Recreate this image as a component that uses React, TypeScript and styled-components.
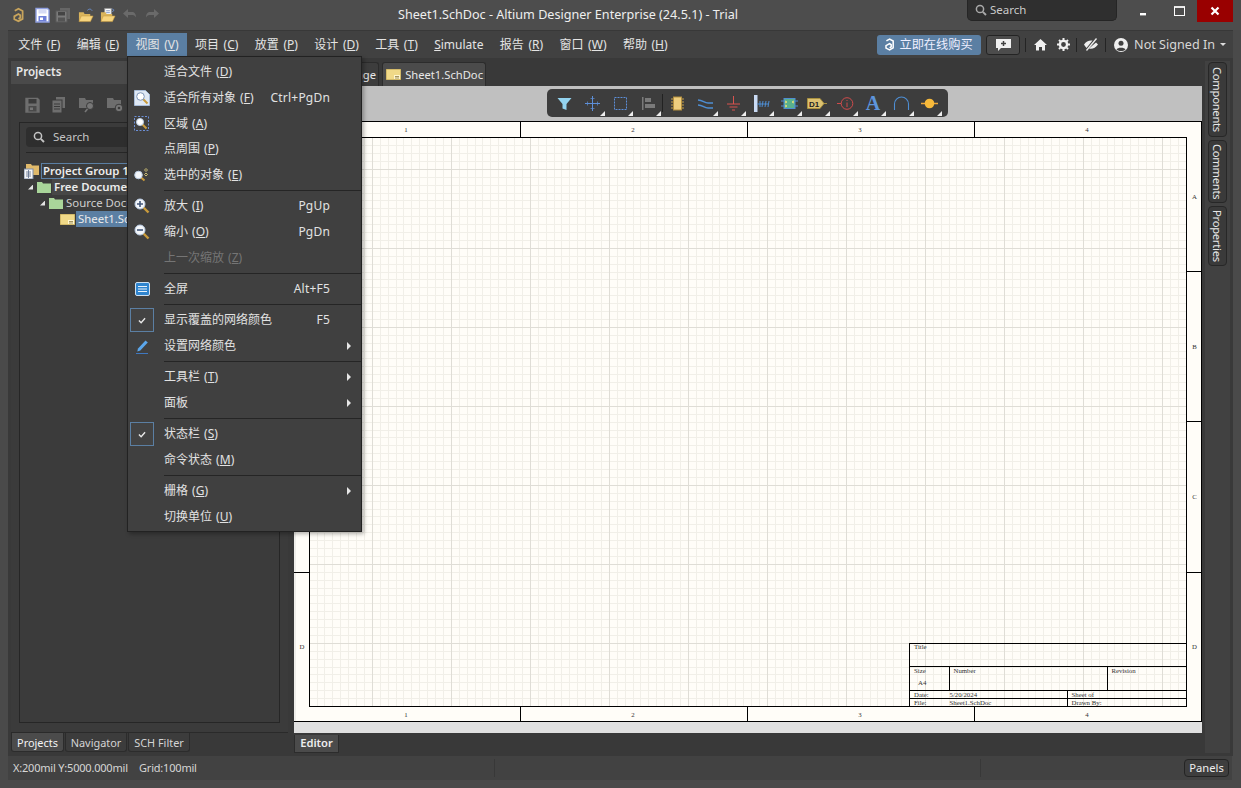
import React from "react";
import styled, { createGlobalStyle } from "styled-components";

const Global = createGlobalStyle`
  html, body { margin: 0; padding: 0; background: #4a4a4a; }
  #root { width: 1241px; height: 788px; overflow: hidden; }
  * { box-sizing: border-box; }
  u { text-underline-offset: 1px; }
`;
const FONT = `"Noto Sans", "Noto Sans CJK SC", sans-serif`;

const Window = styled.div`
  position: relative; width: 1241px; height: 788px; background: #4a4a4a; overflow: hidden;
  display: flex; flex-direction: column; font: 12px/16px ${FONT}; color: #e4e4e4;
`;
const TitleBar = styled.header`
  height: 30px; flex: none; display: flex; align-items: flex-start; background: #4d4d4d; padding-left: 12px; position: relative;
`;
const QuickIcons = styled.div`display: flex; align-items: center; height: 30px; width: 160px;`;
const QuickIcon = styled.span<{ $w: number }>`width: ${p => p.$w}px; height: 16px; display: flex; justify-content: center; flex: none;`;
const AppTitle = styled.div`
  width: 620px; margin-left: 0; padding-left: 226px; height: 30px; line-height: 30px; font-size: 12.6px; color: #efefef; white-space: nowrap; flex: none;
`;
const TopSearch = styled.div`
  margin-left: 175px; width: 150px; height: 21px; background: #2f2f2f; border: 1px solid #252525; border-top: 0; border-radius: 0 0 5px 5px;
  display: flex; align-items: center; padding-left: 7px; gap: 3px; font-size: 11.5px; color: #c9c9c9; flex: none;
`;
const WinButtons = styled.div`display: flex; margin-left: 8px; flex: none;`;
const WinBtn = styled.div<{ $close?: boolean }>`
  width: 36px; height: 22px; display: flex; align-items: center; justify-content: center; background: ${p => p.$close ? "#990000" : "transparent"};
`;
const MenuBar = styled.nav`
  height: 28px; flex: none; margin: 0 8px; background: #414141; border-top: 1px solid #383838; display: flex; align-items: center; padding: 0 0 0 2px;
`;
const MenuItem = styled.div<{ $active?: boolean }>`
  height: 24px; line-height: 24px; padding: 0 8.2px; white-space: nowrap; font-size: 12px; word-spacing: 1.5px; margin-top: 1px; background: ${p => p.$active ? "#5b7fa3" : "transparent"};
`;
const MenuRight = styled.div`margin-left: auto; display: flex; align-items: center; height: 24px; padding-right: 7px;`;
const BuyButton = styled.div`
  width: 104px; height: 20px; border-radius: 3px; background: #5b7fa3; display: flex; align-items: center; padding-left: 7px; gap: 5px; font-size: 12.2px; color: #eef;
`;
const ChatButton = styled.div`
  margin-left: 5px; width: 34px; height: 20px; background: #4c4c4c; border: 1px solid #242424; border-radius: 3px; display: flex; align-items: center; justify-content: center;
`;
const BarSep = styled.span<{ $ml: number }>`width: 1px; height: 14px; background: #242424; margin-left: ${p => p.$ml}px; flex: none;`;
const TopGlyph = styled.span<{ $ml: number }>`margin-left: ${p => p.$ml}px; height: 16px; display: flex; align-items: center; flex: none;`;
const SignIn = styled.span`margin-left: 6px; font-size: 12.6px; color: #d8d8d8; white-space: nowrap;`;
const Caret = styled.span`margin-left: 5px; width: 0; height: 0; border: 3px solid transparent; border-top: 3px solid #ddd; border-bottom: 0;`;

const Body = styled.main`flex: 1; margin: 0 8px; background: #393939; display: flex; min-height: 0;`;
const ProjectPanel = styled.aside`width: 277px; margin: 3px 0 0 3px; display: flex; flex-direction: column; flex: none;`;
const PanelHead = styled.div`height: 23px; line-height: 22px; background: #4a4a4a; padding-left: 5px; font-weight: 600; font-size: 11.6px; color: #e8e8e8; flex: none;`;
const PanelBody = styled.div`flex: 1; min-height: 0; background: #3b3b3b; padding: 0 8px 9px; display: flex; flex-direction: column; border-bottom: 1px solid #2a2a2a;`;
const PanelTools = styled.div`height: 38px; padding: 13px 0 0 6px; display: flex; gap: 10px; flex: none;`;
const ListBox = styled.div`flex: 1; border: 1px solid #262626; padding: 4px 6px; overflow: hidden; min-height: 0;`;
const SearchField = styled.div`
  height: 20px; background: #2e2e2e; border-radius: 4px; display: flex; align-items: center; gap: 8px; padding: 0 0 1px 7px; color: #c4c4c4; font-size: 11.5px;
`;
const Rule = styled.div`height: 1px; background: #262626; margin-top: 5px;`;
const Tree = styled.div`margin-top: 10px; margin-left: -7px;`;
const TreeRow = styled.div<{ $indent: number }>`height: 16px; display: flex; align-items: center; padding-left: ${p => p.$indent}px; white-space: nowrap;`;
const Twist = styled.span`width: 5px; height: 5px; background: #e4e4e4; clip-path: polygon(100% 0, 100% 100%, 0 100%); margin: 0 4px 0 2px; flex: none;`;
const TreeLabel = styled.span<{ $kind?: string }>`
  margin-left: 1px; padding: 0 2px; line-height: 15px; height: 16px; font-size: 11.4px; color: #e6e6e6;
  font-weight: ${p => (p.$kind === "bold" || p.$kind === "group") ? 600 : 400};
  background: ${p => p.$kind === "selected" ? "#5b7fa3" : p.$kind === "bold" ? "#474747" : "transparent"};
  outline: ${p => p.$kind === "group" ? "1px solid #5b7fa3" : "none"}; outline-offset: -1px;
  color: ${p => p.$kind === "source" ? "#cfcfcf" : "#ececec"};
`;
const TabStrip = styled.div`height: 19px; display: flex; flex: none; padding-left: 0; gap: 1px;`;
const BottomTab = styled.div<{ $active?: boolean; $w: number }>`
  width: ${p => p.$w}px; text-align: center; line-height: 19px; font-size: 10.9px; color: ${p => p.$active ? "#f4f4f4" : "#d4d4d4"};
  background: ${p => p.$active ? "#4b4b4b" : "#3c3c3c"}; border: 1px solid #2c2c2c; border-top: 0; border-radius: 0 0 3px 3px;
`;
const PanelFoot = styled.div`height: 4px; flex: none;`;

const DocColumn = styled.section`width: 908px; margin-left: 6px; display: flex; flex-direction: column; flex: none;`;
const DocTabs = styled.div`height: 28px; padding-top: 4px; display: flex; flex: none; padding-left: 8px; gap: 3px;`;
const DocTab = styled.div<{ $active?: boolean; $w: number }>`
  width: ${p => p.$w}px; height: 24px; background: ${p => p.$active ? "#4b4b4b" : "#3d3d3d"}; border: 1px solid #2c2c2c; border-bottom: 0; border-radius: 3px 3px 0 0;
  display: flex; align-items: center; justify-content: flex-end; gap: 4px; padding: 0 2px; font-size: 11.2px; color: #e8e8e8; white-space: nowrap;
`;
const Canvas = styled.div`position: relative; height: 647px; flex: none; display: flex; flex-direction: column; background: #e0e0e0;`;
const TopStrip = styled.div`height: 35px; background: #c0c0c0; flex: none;`;
const Sheet = styled.svg`display: block; flex: none;`;
const PlaceBar = styled.div`
  position: absolute; left: 253px; top: 3px; width: 401px; height: 28px; background: #3d3d3d; border-radius: 5px; display: flex; padding-left: 3px;
`;
const PlaceCell = styled.div`position: relative; width: 28px; height: 28px; flex: none; display: flex; align-items: center; justify-content: center;`;
const Corner = styled.span`position: absolute; right: 1px; bottom: 1px; width: 5px; height: 5px; background: #eee; clip-path: polygon(100% 0, 100% 100%, 0 100%);`;
const PlaceSep = styled.span`width: 1px; height: 18px; background: #222; margin: 5px 0 0 0; flex: none;`;
const EditorStrip = styled.div`height: 23px; padding-top: 2px; flex: none;`;
const EditorTab = styled.div`
  width: 45px; height: 18px; background: #4b4b4b; border: 1px solid #2c2c2c; border-top: 0; text-align: center; line-height: 16px; font-size: 11.2px; font-weight: 600; color: #eee;
`;
const Rail = styled.div`width: 25px; margin: 3px 0 3px 3px; background: #414141; padding: 1px 3px; display: flex; flex-direction: column; gap: 3px; flex: none;`;
const RailTab = styled.div<{ $h: number }>`
  height: ${p => p.$h}px; width: 19px; background: #3a3a3a; border: 1px solid #272727; border-radius: 4px; writing-mode: vertical-rl;
  display: flex; align-items: center; justify-content: center; font-size: 11.2px; line-height: 17px; color: #e8e8e8; letter-spacing: -0.25px;
`;
const StatusBar = styled.footer`
  height: 24px; flex: none; margin: 0 9px 8px 8px; background: #424242; display: flex; align-items: center; padding-left: 5px; font-size: 11px; letter-spacing: -0.2px; color: #d6d6d6; white-space: nowrap;
`;
const StatusText = styled.span`width: 126px; flex: none;`;
const GridText = styled.span`width: 60px; flex: none;`;
const StatusSep = styled.span<{ $ml: number }>`margin-left: ${p => p.$ml}px; width: 1px; height: 18px; background: #383838; flex: none;`;
const PanelsBtn = styled.div`
  margin-left: 203px; width: 45px; height: 18px; background: #3e3e3e; border: 1px solid #242424; border-radius: 4px; text-align: center; line-height: 15px; font-size: 11.2px; letter-spacing: 0; color: #eee;
`;

const DropMenu = styled.div`
  position: absolute; left: 127px; top: 56px; width: 235px; height: 476px; padding-top: 2px; background: #404040; border: 1px solid #222; box-shadow: 2px 2px 4px rgba(0,0,0,.3); z-index: 5;
`;
const DropRow = styled.div<{ $off?: boolean }>`
  height: 25.85px; display: flex; align-items: center; color: ${p => p.$off ? "#757575" : "#e2e2e2"}; font-size: 12px; white-space: nowrap;
`;
const IconSlot = styled.span`width: 36px; flex: none; display: flex; justify-content: center; padding-right: 8px; position: relative;`;
const CheckBox = styled.span`
  width: 24px; height: 24px; border: 1px solid #5b7fa3; display: flex; align-items: center; justify-content: center; background: #434343; flex: none;
`;
const RowLabel = styled.span`flex: 1; word-spacing: 1px;`;
const Shortcut = styled.span`margin-right: 31px; letter-spacing: 0.2px;`;
const Arrow = styled.span`margin-right: 10px; width: 0; height: 0; border-left: 4px solid #e6e6e6; border-top: 4px solid transparent; border-bottom: 4px solid transparent;`;
const DropSep = styled.div`height: 1px; margin: 2.125px 0 2.125px 36px; background: #252525;`;

/* ---------- icons ---------- */
const Floppy = ({ c = "#8f9fe0", dim = false }: { c?: string; dim?: boolean }) => (
  <svg width="15" height="16" viewBox="0 0 15 16">
    <path d="M1 1.500h11.500L14 3v12H1z" fill={dim ? "#6e6e6e" : "#fff"} stroke={dim ? "#6e6e6e" : c} strokeWidth="1.400" />
    <rect x="3.500" y="2" width="8" height="4.500" fill={dim ? "#3b3b3b" : "#d7dcf5"} />
    <rect x="3.500" y="9" width="8" height="5.500" fill={dim ? "#4a4a4a" : "#6f80d8"} />
    <rect x="5" y="10.500" width="3" height="2.500" fill={dim ? "#777" : "#fff"} />
  </svg>
);
const SaveAll = () => (
  <svg width="16" height="16" viewBox="0 0 16 16">
    <rect x="5" y="1" width="10" height="11" fill="#666" />
    <rect x="1" y="4" width="11" height="11" fill="#7a7a7a" stroke="#5a5a5a" />
    <rect x="3" y="5" width="7" height="3.500" fill="#444" />
    <rect x="3" y="10.500" width="7" height="4" fill="#545454" />
  </svg>
);
const OpenFolder = ({ doc = false }: { doc?: boolean }) => (
  <svg width="17" height="17" viewBox="0 0 17 17">
    {doc && <path d="M5 1h7v9H5z" fill="#fff" stroke="#999" />}
    {doc && <path d="M6.500 3.500h4M6.500 5.500h4M6.500 7.500h4" stroke="#7d92c0" />}
    {!doc && <path d="M10 3c2-2 4-1.500 5 0.500" stroke="#6b8fd0" fill="none" />}
    <path d="M1 5h5l1 2h6v7H1z" fill="#d9b45c" />
    <path d="M3.500 9H16l-2.800 6H1z" fill="#f6d47e" stroke="#c89c42" strokeWidth=".6" />
    {doc && <path d="M13 1.500l2 1.500-2 1.500" stroke="#6b8fd0" fill="none" />}
  </svg>
);
const Curve = ({ flip = false }: { flip?: boolean }) => (
  <svg width="16" height="12" viewBox="0 0 16 12" style={flip ? { transform: "scaleX(-1)" } : undefined}>
    <path d="M3 5h7c3 0 4 2.500 4 5.500C12.500 8 11 8 9 8H6v3L1 6.500 6 2v3" fill="#6a6a6a" />
  </svg>
);
const AltiumMark = ({ c = "#c8a45c", s = 16 }: { c?: string; s?: number }) => (
  <svg width={s * 0.8} height={s} viewBox="0 0 13 16" fill="none">
    <path d="M3 3.500 7 1.200l4.500 2.500v8.500L7 14.800l-4.500-2.300V9.500L7 7l2 1.300v2.700L7 12.200" stroke={c} strokeWidth="1.900" />
  </svg>
);
const SearchGlass = ({ c = "#a9a9a9" }: { c?: string }) => (
  <svg width="12" height="12" viewBox="0 0 12 12" fill="none">
    <circle cx="5" cy="5" r="3.600" stroke={c} strokeWidth="1.500" />
    <path d="M7.800 7.800 11 11" stroke={c} strokeWidth="1.900" />
  </svg>
);
const Lens = ({ sign }: { sign?: "+" | "-" }) => (
  <svg width="16" height="16" viewBox="0 0 16 16">
    <path d="M9 9l5.500 5.500" stroke="#c99b3c" strokeWidth="2.400" />
    <circle cx="6" cy="6" r="5" fill="#f4f7fb" stroke="#b9cbe2" />
    {sign && <path d={sign === "+" ? "M3 6h6M6 3v6" : "M3 6h6"} stroke="#43577a" strokeWidth="1.600" />}
  </svg>
);
const PageLens = () => (
  <svg width="16" height="16" viewBox="0 0 16 16">
    <path d="M.5.500h11l4 4v11H.500z" fill="#dfe8f4" stroke="#a8bcd8" />
    <path d="M9 9l4.500 4.500" stroke="#c99b3c" strokeWidth="2" />
    <circle cx="6.500" cy="6.500" r="3.800" fill="#fff" stroke="#7d94b8" />
  </svg>
);
const AreaLens = () => (
  <svg width="16" height="16" viewBox="0 0 16 16">
    <rect x=".5" y=".5" width="14" height="14" fill="none" stroke="#6c8fd6" strokeDasharray="2 1.500" />
    <path d="M8 8l4.500 4.500" stroke="#c99b3c" strokeWidth="2" />
    <circle cx="6" cy="6" r="3.500" fill="#fff" stroke="#b9cbe2" />
  </svg>
);
const SelLens = () => (
  <svg width="16" height="16" viewBox="0 0 16 16">
    <path d="M6.500 10l4 3.500" stroke="#c99b3c" strokeWidth="2" />
    <circle cx="4.500" cy="8" r="3.800" fill="#f4f7fb" stroke="#b9cbe2" />
    <path d="M12 1.500l1.500 1.500-1.500 1.500-1.500-1.500zM12 6l1.500 1.500-1.500 1.500-1.500-1.500z" fill="none" stroke="#d8c878" strokeWidth=".9" />
  </svg>
);
const Screen = () => (
  <svg width="15" height="14" viewBox="0 0 15 14">
    <rect x=".5" y=".5" width="14" height="13" rx="1.500" fill="#2f85cf" stroke="#cfe0f0" />
    <path d="M3 4.500h9M3 7h9M3 9.500h9" stroke="#e8f2fb" />
  </svg>
);
const Pen = () => (
  <svg width="14" height="15" viewBox="0 0 14 15">
    <path d="M3 9.500 10.500 1.500l2.300 2-7.500 8-3 1z" fill="#5ba7ec" />
    <path d="M1 14.500h12" stroke="#3f78c0" />
  </svg>
);
const Tick = () => (
  <svg width="8" height="7" viewBox="0 0 9 8" fill="none"><path d="M1 4l2.500 2.500L8 1.500" stroke="#e8e8e8" strokeWidth="1.600" /></svg>
);
const Folder = ({ c = "#a9d59a" }: { c?: string }) => (
  <svg width="14" height="12" viewBox="0 0 14 12"><path d="M0 1h5l1 1.500h8V12H0z" fill={c} /></svg>
);
const SchDocIcon = () => (
  <svg width="15" height="11" viewBox="0 0 15 11">
    <rect width="15" height="11" fill="#f0d988" stroke="#b59b4c" />
    <rect x="8" y="6" width="6" height="4" fill="#fff6cf" />
    <path d="M9 7.500h4M9 9h4" stroke="#7c6a2e" strokeWidth=".7" />
  </svg>
);
const GroupIcon = () => (
  <svg width="16" height="15" viewBox="0 0 16 15">
    <path d="M2 0h5l1 1.500h7V11H2z" fill="#e0b96a" />
    <rect x="0" y="5" width="9" height="10" fill="#f6f6f6" stroke="#7d8da8" />
    <path d="M2 8h5M2 10h5M2 12h5M4.500 6v8" stroke="#5a6b88" strokeWidth=".8" />
  </svg>
);
const ToolGlyph = ({ kind }: { kind: "copy" | "search" | "gear" }) => (
  <svg width="18" height="16" viewBox="0 0 18 16">
    {kind === "copy" ? (
      <g fill="#6e6e6e"><rect x="6" y="0" width="9" height="11" /><rect x="2" y="3" width="10" height="13" stroke="#3b3b3b" /><path d="M4 7h6M4 9.500h6M4 12h6" stroke="#3b3b3b" /></g>
    ) : (
      <g>
        <path d="M1 1h6l1 2h7v8H1z" fill="#6e6e6e" />
        {kind === "search"
          ? <g><circle cx="12" cy="9" r="3.500" fill="#777" stroke="#3b3b3b" /><path d="M9.500 12l-2.500 3" stroke="#777" strokeWidth="1.600" /></g>
          : <g><circle cx="13" cy="11" r="3.800" fill="#777" stroke="#3b3b3b" /><circle cx="13" cy="11" r="1.300" fill="#3b3b3b" /></g>}
      </g>
    )}
  </svg>
);
const Home = () => (
  <svg width="13" height="13" viewBox="0 0 13 13"><path d="M6.500 1 13 7h-2v5.500H8V9H5v3.500H2V7H0z" fill="#f0f0f0" /></svg>
);
const Gear = () => (
  <svg width="13" height="13" viewBox="0 0 13 13">
    <circle cx="6.500" cy="6.500" r="3.600" fill="none" stroke="#f0f0f0" strokeWidth="2.400" />
    <path d="M6.500 0v13M0 6.500h13M2 2l9 9M11 2l-9 9" stroke="#f0f0f0" strokeWidth="2" strokeDasharray="2 9 2 0" />
  </svg>
);
const NoEye = () => (
  <svg width="14" height="13" viewBox="0 0 14 13">
    <path d="M0 6.500C2 3.500 5 2 8.500 2.500L2.500 10C1.500 9 .7 7.800 0 6.500z" fill="#eee" />
    <path d="M12 4.500 14 6.500C11.500 10 8 11.500 5 10.500z" fill="#eee" />
    <path d="M2.500 12.500 12.500 .5" stroke="#eee" strokeWidth="1.300" />
  </svg>
);
const User = () => (
  <svg width="14" height="14" viewBox="0 0 14 14">
    <circle cx="7" cy="7" r="7" fill="#efefef" />
    <circle cx="7" cy="5.300" r="2.500" fill="#414141" />
    <path d="M2.500 11.500C3.500 9 10.500 9 11.500 11.500 9 13.500 5 13.500 2.500 11.500z" fill="#414141" />
  </svg>
);
const Chat = () => (
  <svg width="17" height="14" viewBox="0 0 17 14">
    <path d="M1 1h15v9H6l-3 3v-3H1z" fill="#f0f0f0" />
    <path d="M8.500 3v5M6 5.500h5" stroke="#414141" strokeWidth="1.500" />
  </svg>
);
const place: Record<string, React.ReactNode> = {
  filter: <path d="M1.500 3h14l-5 6v6l-4-1.500V9z" fill="#93d3ef" />,
  cross: <g stroke="#5d8fd8" fill="none"><path d="M8.500 1v15M1 8.500h15" /><path d="M6.500 3.500h4M6.500 13.500h4M3.500 6.500v4M13.500 6.500v4" strokeWidth=".7" /></g>,
  rect: <rect x="2.500" y="2.500" width="12" height="12" fill="none" stroke="#5d8fd8" strokeDasharray="2 1" />,
  align: <g fill="#7a7a7a"><rect x="2" y="2" width="1.500" height="13" /><rect x="5" y="3" width="6" height="4" /><rect x="5" y="9" width="10" height="4" /></g>,
  chip: <g><path d="M2 4h13M2 7h13M2 10h13M2 13h13" stroke="#c7a14a" /><rect x="4.500" y="2" width="8" height="13" fill="#efce7e" stroke="#b48f3e" /></g>,
  wires: <g stroke="#4e8ed3" strokeWidth="1.600" fill="none"><path d="M1 5c5 0 6 3 10 3h5" /><path d="M1 10c5 0 6 3 10 3h5" /></g>,
  gnd: <g stroke="#d9534f" fill="none"><path d="M8.500 1v8" /><path d="M2 9h13M4.500 12h8M7 15h3" /></g>,
  bus: <g><rect x="1" y="0" width="3.500" height="17" fill="#c9daf4" /><path d="M4 9h11M7 6v6M10 6l-1 6M13 6l-1 6M16 6l-1 6" stroke="#4e8ed3" fill="none" /></g>,
  sheet: <g><rect x="3" y="3.500" width="11" height="10" fill="#59b08c" stroke="#4e8ed3" /><path d="M0 6h4M0 11h4M13 6h4M13 11h4" stroke="#4e8ed3" /><path d="M4 6l2 1-2 1M4 10l2 1-2 1M13 6l-2 1 2 1" stroke="#e9e07a" fill="none" /></g>,
  probe: <g stroke="#cf4b4b" fill="none"><circle cx="10" cy="8.500" r="5.800" /><path d="M0 8.500h4M10 5v1M10 7.500V12" /></g>,
  arc: <path d="M1.500 15V9a7 7 0 0 1 14 0v6" fill="none" stroke="#4e8ed3" strokeWidth="1.100" />,
  dot: <g><path d="M0 8.500h17" stroke="#f1a93a" strokeWidth="1.500" /><circle cx="8.500" cy="8.500" r="4.800" fill="#f7b93a" /></g>,
};
const Tagged = () => (
  <svg width="20" height="11" viewBox="0 0 20 11">
    <path d="M.5.500h12.500l4 5-4 5H.5z" fill="#dcc272" stroke="#a9913f" />
    <path d="M17 5.500h3" stroke="#a9913f" />
    <text x="2" y="8.500" fontFamily="Liberation Sans, sans-serif" fontSize="8" fontWeight="700" fill="#222">D1</text>
  </svg>
);
const ALetter = styled.span`font: 700 20px/20px "Liberation Serif", serif; color: #5d95dc;`;
const PI = ({ k }: { k: string }) => <svg width="17" height="17" viewBox="0 0 17 17">{place[k]}</svg>;

/* ---------- data ---------- */
const topMenu: React.ReactNode[] = [
  <>文件 (<u>F</u>)</>, <>编辑 (<u>E</u>)</>, <>视图 (<u>V</u>)</>, <>项目 (<u>C</u>)</>, <>放置 (<u>P</u>)</>, <>设计 (<u>D</u>)</>,
  <>工具 (<u>T</u>)</>, <><u>S</u>imulate</>, <>报告 (<u>R</u>)</>, <>窗口 (<u>W</u>)</>, <>帮助 (<u>H</u>)</>,
];
type Entry = { label?: React.ReactNode; icon?: React.ReactNode; key?: string; sub?: boolean; off?: boolean; sep?: boolean };
const check = <CheckBox><Tick /></CheckBox>;
const menu: Entry[] = [
  { label: <>适合文件 (<u>D</u>)</> },
  { label: <>适合所有对象 (<u>F</u>)</>, icon: <PageLens />, key: "Ctrl+PgDn" },
  { label: <>区域 (<u>A</u>)</>, icon: <AreaLens /> },
  { label: <>点周围 (<u>P</u>)</> },
  { label: <>选中的对象 (<u>E</u>)</>, icon: <SelLens /> },
  { sep: true },
  { label: <>放大 (<u>I</u>)</>, icon: <Lens sign="+" />, key: "PgUp" },
  { label: <>缩小 (<u>O</u>)</>, icon: <Lens sign="-" />, key: "PgDn" },
  { label: <>上一次缩放 (<u>Z</u>)</>, off: true },
  { sep: true },
  { label: <>全屏</>, icon: <Screen />, key: "Alt+F5" },
  { sep: true },
  { label: <>显示覆盖的网络颜色</>, icon: check, key: "F5" },
  { label: <>设置网络颜色</>, icon: <Pen />, sub: true },
  { sep: true },
  { label: <>工具栏 (<u>T</u>)</>, sub: true },
  { label: <>面板</>, sub: true },
  { sep: true },
  { label: <>状态栏 (<u>S</u>)</>, icon: check },
  { label: <>命令状态 (<u>M</u>)</> },
  { sep: true },
  { label: <>栅格 (<u>G</u>)</>, sub: true },
  { label: <>切换单位 (<u>U</u>)</> },
];

const range = (n: number) => Array.from({ length: n }, (_, i) => i);
const L = 310, R = 1187, T = 137, B = 706;
const SheetText = styled.text`font-family: "Liberation Serif", serif; font-size: 6.8px; fill: #333;`;

const SheetDrawing = () => {
  const minorX: number[] = [], majorX: number[] = [], minorY: number[] = [], majorY: number[] = [];
  range(130).forEach(i => { const x = 293.3 + i * 7.9; if (x > L && x < R - 1) (i % 10 === 0 ? majorX : minorX).push(Math.floor(x) + 0.5); });
  range(90).forEach(i => { const y = 90.3 + i * 7.9; if (y > T && y < B) (i % 10 === 0 ? majorY : minorY).push(Math.floor(y) + 0.5); });
  const ink = "#000";
  return (
    <Sheet width={908} height={601} viewBox="294 121 908 601" shapeRendering="crispEdges">
      <rect x="294" y="121" width="908" height="601" fill="#fffdf8" />
      <rect x="294" y="121" width="2" height="601" fill="#efeeea" />
      {minorX.map(x => <line key={x} x1={x} x2={x} y1={T} y2={B} stroke="#f1efe8" />)}
      {minorY.map(y => <line key={y} x1={L} x2={R} y1={y} y2={y} stroke="#f1efe8" />)}
      {majorX.map(x => <line key={x} x1={x} x2={x} y1={T} y2={B} stroke="#dfddd6" />)}
      {majorY.map(y => <line key={y} x1={L} x2={R} y1={y} y2={y} stroke="#dfddd6" />)}
      <g stroke={ink} fill="none">
        <path d="M294 121.500H1201.500V721.500H294" />
        <rect x={309.5} y={T + .5} width={877} height={B - T} />
        {[520, 747, 974].map(x => <path key={x} d={`M${x}.5 121V${T}M${x}.5 ${B}V722`} />)}
        {[271, 421, 572].map(y => <path key={y} d={`M294 ${y}.5H${L}M${R} ${y}.5H1202`} />)}
        <path d="M909.500 706V643.500H1186M909 666.500H1186M909 690.500H1186M909 698.500H1186M949.500 666V690M1107.500 666V690M1067.500 690V706" />
      </g>
      <g textAnchor="middle">
        {[["1", 406], ["2", 633], ["3", 860], ["4", 1087]].map(([t, x]) => (
          <React.Fragment key={t}>
            <SheetText x={x} y={132}>{t}</SheetText>
            <SheetText x={x} y={717}>{t}</SheetText>
          </React.Fragment>
        ))}
        {[["A", 199], ["B", 349], ["C", 499], ["D", 648.5]].map(([t, y]) => (
          <SheetText key={t} x={1194.5} y={y}>{t}</SheetText>
        ))}
        <SheetText x={302} y={648.5}>D</SheetText>
      </g>
      <SheetText x={914} y={649}>Title</SheetText>
      <SheetText x={914} y={673}>Size</SheetText>
      <SheetText x={918} y={685}>A4</SheetText>
      <SheetText x={953.5} y={673}>Number</SheetText>
      <SheetText x={1111.5} y={673}>Revision</SheetText>
      <SheetText x={914} y={696.5}>Date:</SheetText>
      <SheetText x={949.5} y={696.5}>5/20/2024</SheetText>
      <SheetText x={1071.5} y={696.5}>Sheet   of</SheetText>
      <SheetText x={914} y={704.5}>File:</SheetText>
      <SheetText x={949.5} y={704.5}>Sheet1.SchDoc</SheetText>
      <SheetText x={1071.5} y={704.5}>Drawn By:</SheetText>
    </Sheet>
  );
};

export default function App() {
  return (
    <Window>
      <Global />
      <TitleBar>
        <QuickIcons>
          <QuickIcon $w={12}><AltiumMark /></QuickIcon>
          <QuickIcon $w={10} />
          <QuickIcon $w={16}><Floppy /></QuickIcon>
          <QuickIcon $w={5} />
          <QuickIcon $w={16}><SaveAll /></QuickIcon>
          <QuickIcon $w={7} />
          <QuickIcon $w={16}><OpenFolder /></QuickIcon>
          <QuickIcon $w={6} />
          <QuickIcon $w={16}><OpenFolder doc /></QuickIcon>
          <QuickIcon $w={6} />
          <QuickIcon $w={16}><Curve /></QuickIcon>
          <QuickIcon $w={6} />
          <QuickIcon $w={16}><Curve flip /></QuickIcon>
        </QuickIcons>
        <AppTitle>Sheet1.SchDoc - Altium Designer Enterprise (24.5.1) - Trial</AppTitle>
        <TopSearch><SearchGlass />Search</TopSearch>
        <WinButtons>
          <WinBtn><svg width="10" height="10" viewBox="0 0 10 10"><rect x="2" y="7" width="6" height="2.400" fill="#fff" /></svg></WinBtn>
          <WinBtn><svg width="11" height="10" viewBox="0 0 11 10"><rect x=".5" y="1" width="10" height="8.500" fill="none" stroke="#fff" strokeWidth="1" /><path d="M0 1h11" stroke="#fff" strokeWidth="1.500" /></svg></WinBtn>
          <WinBtn $close><svg width="10" height="10" viewBox="0 0 10 10"><path d="M1.500 1.500l7 7M8.500 1.500l-7 7" stroke="#fff" strokeWidth="2.200" /></svg></WinBtn>
        </WinButtons>
      </TitleBar>
      <MenuBar>
        {topMenu.map((m, i) => <MenuItem key={i} $active={i === 2}>{m}</MenuItem>)}
        <MenuRight>
          <BuyButton><AltiumMark c="#fff" s={13} />立即在线购买</BuyButton>
          <ChatButton><Chat /></ChatButton>
          <BarSep $ml={5} />
          <TopGlyph $ml={8}><Home /></TopGlyph>
          <TopGlyph $ml={10}><Gear /></TopGlyph>
          <BarSep $ml={6} />
          <TopGlyph $ml={7}><NoEye /></TopGlyph>
          <BarSep $ml={7} />
          <TopGlyph $ml={8}><User /></TopGlyph>
          <SignIn>Not Signed In</SignIn>
          <Caret />
        </MenuRight>
      </MenuBar>
      <Body>
        <ProjectPanel>
          <PanelHead>Projects</PanelHead>
          <PanelBody>
            <PanelTools>
              <Floppy dim />
              <ToolGlyph kind="copy" />
              <ToolGlyph kind="search" />
              <ToolGlyph kind="gear" />
            </PanelTools>
            <ListBox>
              <SearchField><SearchGlass c="#c4c4c4" />Search</SearchField>
              <Rule />
              <Tree>
                <TreeRow $indent={5}><GroupIcon /><TreeLabel $kind="group">Project Group 1.DsnWrk</TreeLabel></TreeRow>
                <TreeRow $indent={7}><Twist /><Folder /><TreeLabel $kind="bold">Free Documents</TreeLabel></TreeRow>
                <TreeRow $indent={19}><Twist /><Folder /><TreeLabel $kind="source">Source Documents</TreeLabel></TreeRow>
                <TreeRow $indent={41}><SchDocIcon /><TreeLabel $kind="selected">Sheet1.SchDoc</TreeLabel></TreeRow>
              </Tree>
            </ListBox>
          </PanelBody>
          <TabStrip>
            <BottomTab $active $w={53}>Projects</BottomTab>
            <BottomTab $w={62}>Navigator</BottomTab>
            <BottomTab $w={62}>SCH Filter</BottomTab>
          </TabStrip>
          <PanelFoot />
        </ProjectPanel>
        <DocColumn>
          <DocTabs>
            <DocTab $w={77}>Home Page</DocTab>
            <DocTab $active $w={104}><SchDocIcon />Sheet1.SchDoc</DocTab>
          </DocTabs>
          <Canvas>
            <TopStrip />
            <SheetDrawing />
            <PlaceBar>
              {["filter", "cross", "rect", "align"].map(k => (
                <PlaceCell key={k}><PI k={k} />{k !== "filter" && <Corner />}</PlaceCell>
              ))}
              <PlaceSep />
              <PlaceCell><PI k="chip" /></PlaceCell>
              <PlaceCell><PI k="wires" /><Corner /></PlaceCell>
              <PlaceCell><PI k="gnd" /><Corner /></PlaceCell>
              <PlaceCell><PI k="bus" /><Corner /></PlaceCell>
              <PlaceCell><PI k="sheet" /><Corner /></PlaceCell>
              <PlaceCell><Tagged /><Corner /></PlaceCell>
              <PlaceCell><PI k="probe" /><Corner /></PlaceCell>
              <PlaceCell><ALetter>A</ALetter><Corner /></PlaceCell>
              <PlaceCell><PI k="arc" /><Corner /></PlaceCell>
              <PlaceCell><PI k="dot" /><Corner /></PlaceCell>
            </PlaceBar>
          </Canvas>
          <EditorStrip><EditorTab>Editor</EditorTab></EditorStrip>
        </DocColumn>
        <Rail>
          <RailTab $h={75}>Components</RailTab>
          <RailTab $h={63}>Comments</RailTab>
          <RailTab $h={60}>Properties</RailTab>
        </Rail>
      </Body>
      <StatusBar>
        <StatusText>X:200mil Y:5000.000mil</StatusText>
        <GridText>Grid:100mil</GridText>
        <StatusSep $ml={295} />
        <StatusSep $ml={485} />
        <PanelsBtn>Panels</PanelsBtn>
      </StatusBar>
      <DropMenu>
        {menu.map((m, i) => m.sep ? <DropSep key={i} /> : (
          <DropRow key={i} $off={m.off}>
            <IconSlot>{m.icon}</IconSlot>
            <RowLabel>{m.label}</RowLabel>
            {m.key && <Shortcut>{m.key}</Shortcut>}
            {m.sub && <Arrow />}
          </DropRow>
        ))}
      </DropMenu>
    </Window>
  );
}
